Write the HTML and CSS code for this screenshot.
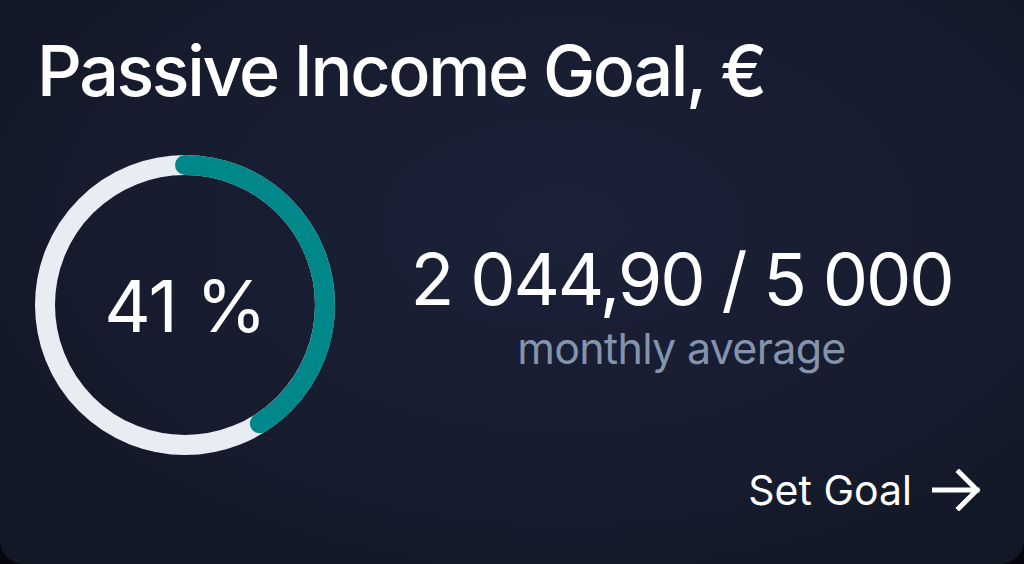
FILE: index.html
```html
<!DOCTYPE html>
<html lang="en">
<head>
<meta charset="utf-8">
<title>Passive Income Goal</title>
<link rel="stylesheet" href="styles.css">
</head>
<body>
<main class="card">
  <h1 class="title">Passive Income Goal, €</h1>
  <section class="body">
    <div class="ring">
      <svg class="ring-svg" width="300" height="300" viewBox="0 0 300 300">
        <circle cx="150" cy="150" r="140" fill="none" stroke="#e8ecf3" stroke-width="20"/>
        <circle cx="150" cy="150" r="140" fill="none" stroke="#00878a" stroke-width="20" stroke-linecap="round"
          stroke-dasharray="360.66 1000" transform="rotate(-90 150 150)"/>
      </svg>
      <span class="pct">41 %</span>
    </div>
    <div class="stats">
      <div class="amount">2 044,90 / 5 000</div>
      <div class="sub">monthly average</div>
    </div>
  </section>
  <footer class="foot">
    <a class="goal-link" href="#">Set Goal
      <svg class="arrow" width="50" height="42" viewBox="0 0 50 42">
        <path d="M2 21 H45 M27 3 L45 21 L27 39" fill="none" stroke="#fff" stroke-width="5" stroke-linecap="square" stroke-linejoin="miter"/>
      </svg>
    </a>
  </footer>
</main>
</body>
</html>
```

FILE: styles.css
```css
html, body {
  margin: 0;
  padding: 0;
  background: #05070c;
}
body {
  width: 1024px;
  height: 564px;
  overflow: hidden;
  font-family: Inter, "Noto Sans", sans-serif;
  color: #ffffff;
}
.card {
  box-sizing: border-box;
  width: 1024px;
  height: 564px;
  border-radius: 0 0 24px 24px;
  background: radial-gradient(ellipse 70% 75% at 55% 40%, #1b2138 0%, #171c2f 55%, #131827 100%);
  padding: 35px 44px 0 37px;
  display: flex;
  flex-direction: column;
}
.title {
  margin: 0;
  font-size: 70px;
  line-height: 72px;
  font-weight: 500;
  letter-spacing: -2.4px;
}
.body {
  display: flex;
  align-items: center;
  margin-top: 48px;
  margin-right: -44px;
  margin-left: -2px;
}
.ring {
  display: grid;
  width: 300px;
  height: 300px;
  place-items: center;
  flex: none;
}
.ring-svg, .pct {
  grid-area: 1 / 1;
}
.pct {
  font-size: 72px;
  font-weight: 400;
  letter-spacing: -1px;
}
.stats {
  flex: 1;
  text-align: center;
  padding-left: 4px;
  margin-top: 10px;
}
.amount {
  font-size: 72px;
  line-height: 56px;
  font-weight: 400;
  letter-spacing: -2.2px;
}
.sub {
  font-size: 43px;
  line-height: 44px;
  color: #8494ad;
  margin-top: 19px;
  letter-spacing: -0.7px;
}
.foot {
  display: flex;
  justify-content: flex-end;
  margin-top: 10px;
  margin-right: -2px;
}
.goal-link {
  display: flex;
  align-items: center;
  gap: 20px;
  color: #ffffff;
  text-decoration: none;
  font-size: 41px;
  font-weight: 400;
}
```
